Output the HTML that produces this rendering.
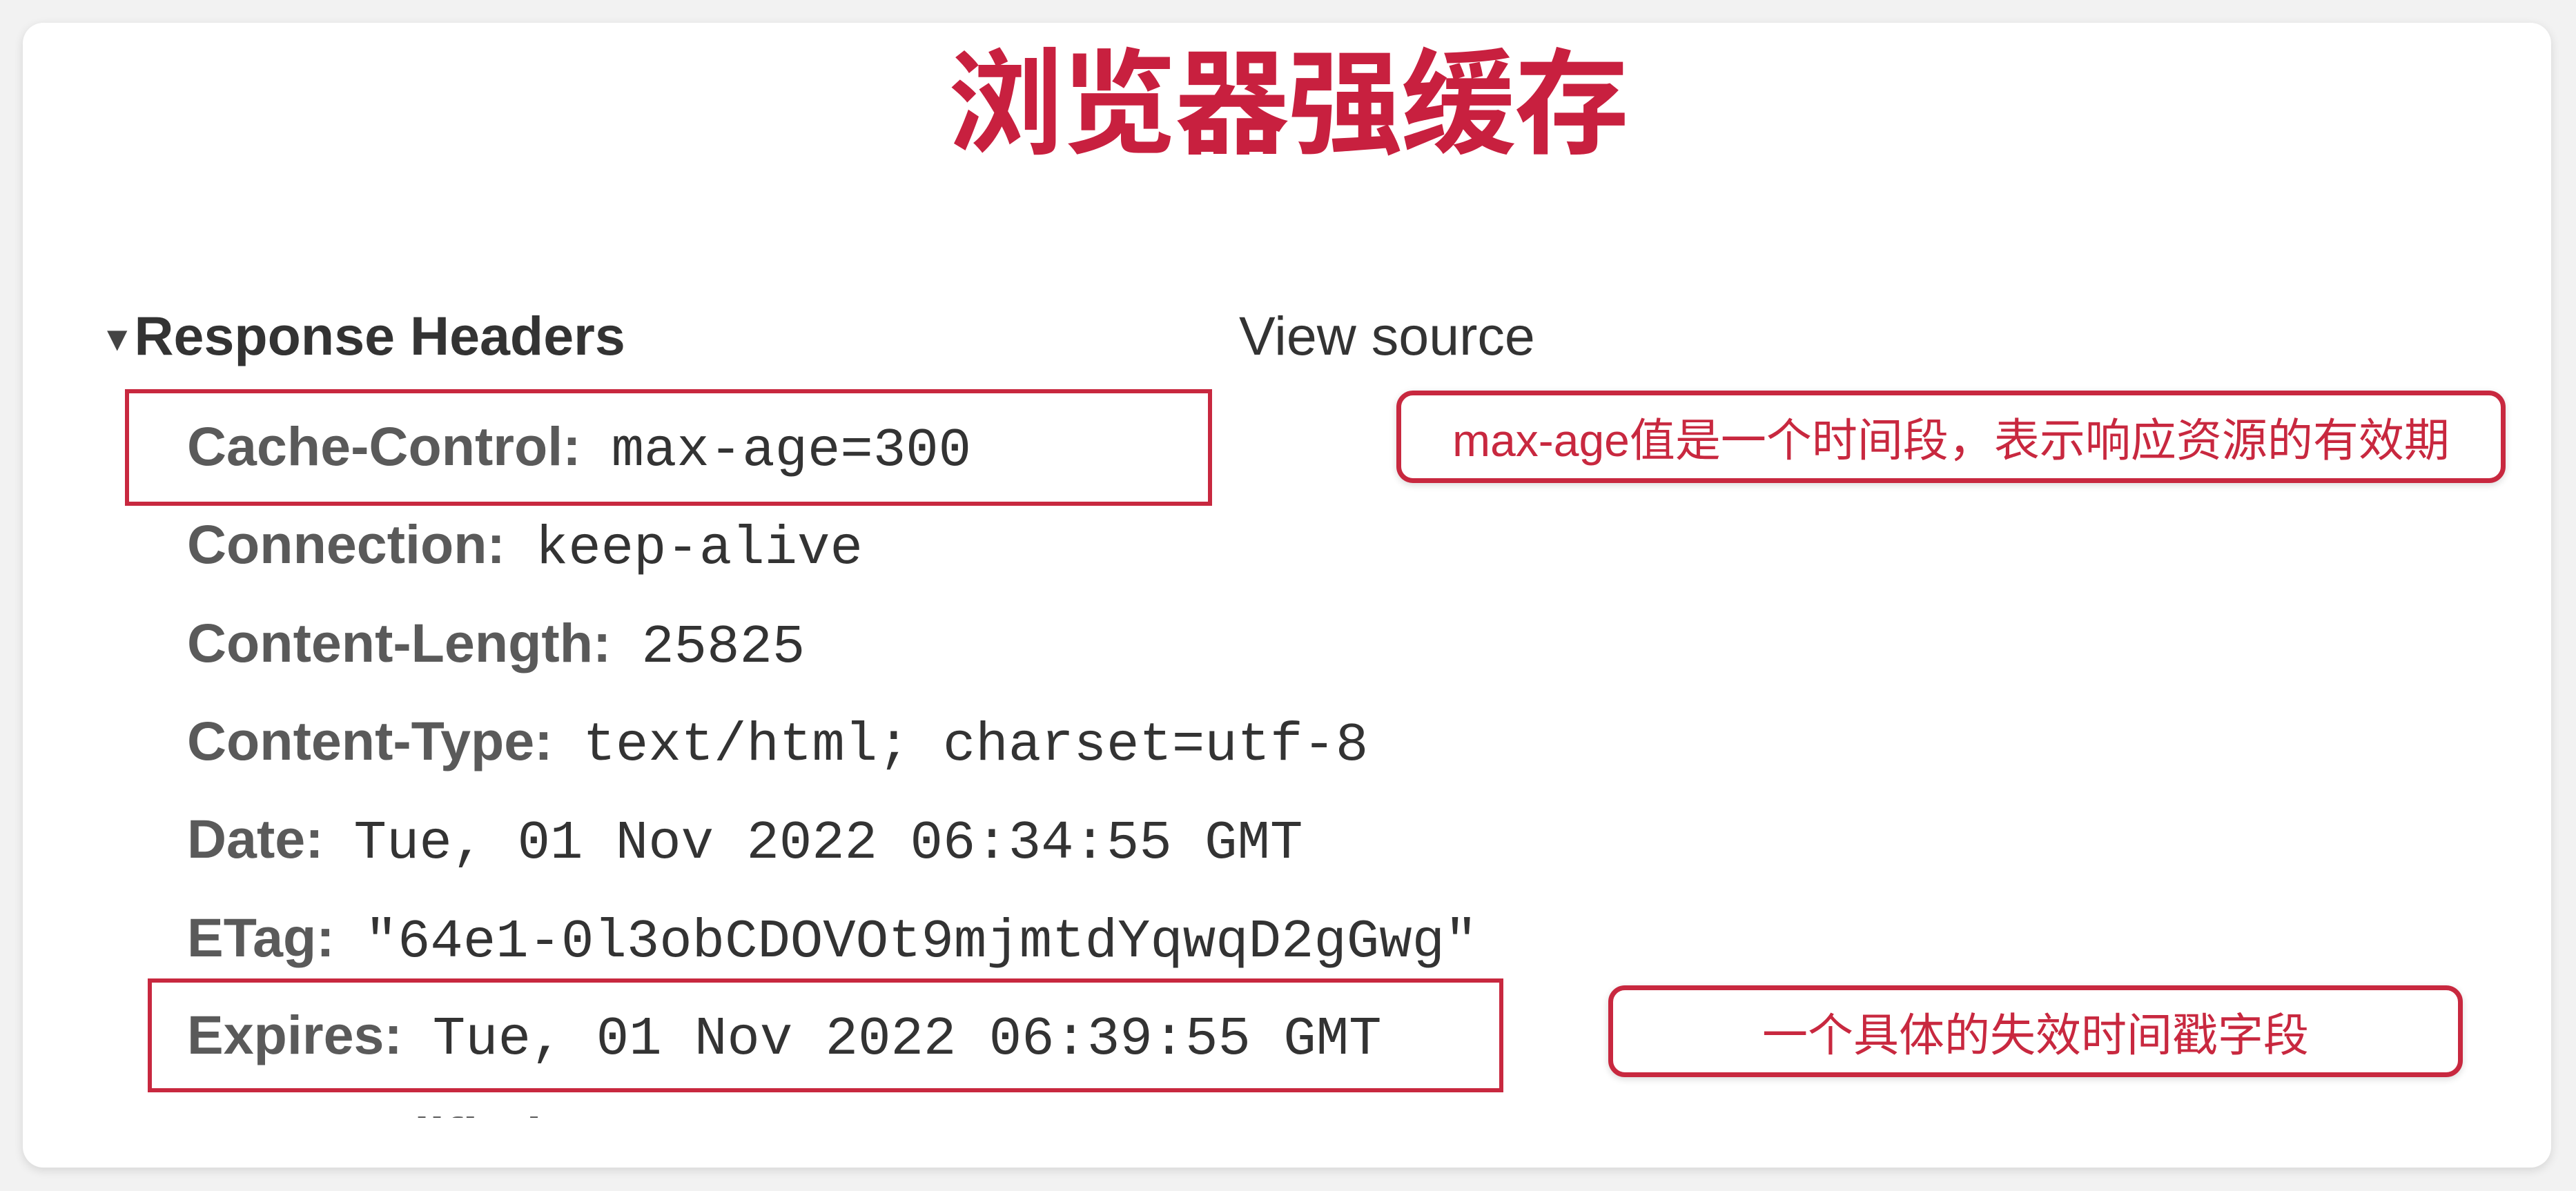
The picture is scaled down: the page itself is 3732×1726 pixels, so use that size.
<!DOCTYPE html>
<html><head><meta charset="utf-8"><style>
html,body{margin:0;padding:0}
body{width:3732px;height:1726px;background:#f2f2f2;position:relative;overflow:hidden;font-family:"Liberation Sans","Noto Sans CJK SC",sans-serif}
.card{position:absolute;left:33px;top:33px;width:3663px;height:1659px;background:#fff;border-radius:30px;box-shadow:0 4px 14px rgba(0,0,0,.12)}
.title{position:absolute;left:0;width:3732px;top:52px;text-align:center;font-family:"Noto Sans CJK SC",sans-serif;font-weight:700;font-size:166px;line-height:170px;color:#c8203f;letter-spacing:-2px}
.t{position:absolute;white-space:nowrap;font-size:79px;line-height:1}
.row{position:absolute;left:271px;white-space:nowrap;font-size:79px;line-height:1}
.row b{color:#5a5a5a;font-weight:700}
.row span{font-family:"Liberation Mono",monospace;color:#333;margin-left:44px}
.box{position:absolute;border:6px solid #c8283f;box-sizing:border-box}
.call{position:absolute;border:7px solid #c8283f;border-radius:24px;box-sizing:border-box;background:#fff;box-shadow:0 3px 10px rgba(0,0,0,.15);display:flex;align-items:center;justify-content:center;color:#c8283f;font-size:66px;font-family:"Liberation Sans","Noto Sans CJK SC",sans-serif}
.clip{position:absolute;left:0;top:1606px;width:3732px;height:14px;overflow:hidden}
</style></head><body>
<div class="card"></div>
<div class="title">浏览器强缓存</div>
<div class="t" style="left:145px;top:447px;font-weight:700;color:#333"><span style="font-size:50px;vertical-align:6px;color:#444">▼</span>Response Headers</div>
<div class="t" style="left:1795px;top:447px;color:#333">View source</div>

<div class="box" style="left:181px;top:564px;width:1575px;height:169px"></div>
<div class="box" style="left:214px;top:1418px;width:1964px;height:165px"></div>

<div class="row" style="top:607px"><b>Cache-Control:</b><span>max-age=300</span></div>
<div class="row" style="top:749px"><b>Connection:</b><span>keep-alive</span></div>
<div class="row" style="top:892px"><b>Content-Length:</b><span>25825</span></div>
<div class="row" style="top:1034px"><b>Content-Type:</b><span>text/html; charset=utf-8</span></div>
<div class="row" style="top:1176px"><b>Date:</b><span>Tue, 01 Nov 2022 06:34:55 GMT</span></div>
<div class="row" style="top:1319px"><b>ETag:</b><span>"64e1-0l3obCDOVOt9mjmtdYqwqD2gGwg"</span></div>
<div class="row" style="top:1460px"><b>Expires:</b><span>Tue, 01 Nov 2022 06:39:55 GMT</span></div>
<div class="clip"><div class="row" style="top:2px"><b>Last-Modified:</b><span>Tue, 01 Nov 2022 06:19:35 GMT</span></div></div>

<div class="call" style="left:2023px;top:566px;width:1607px;height:134px">max-age值是一个时间段，表示响应资源的有效期</div>
<div class="call" style="left:2330px;top:1428px;width:1238px;height:133px">一个具体的失效时间戳字段</div>
</body></html>
